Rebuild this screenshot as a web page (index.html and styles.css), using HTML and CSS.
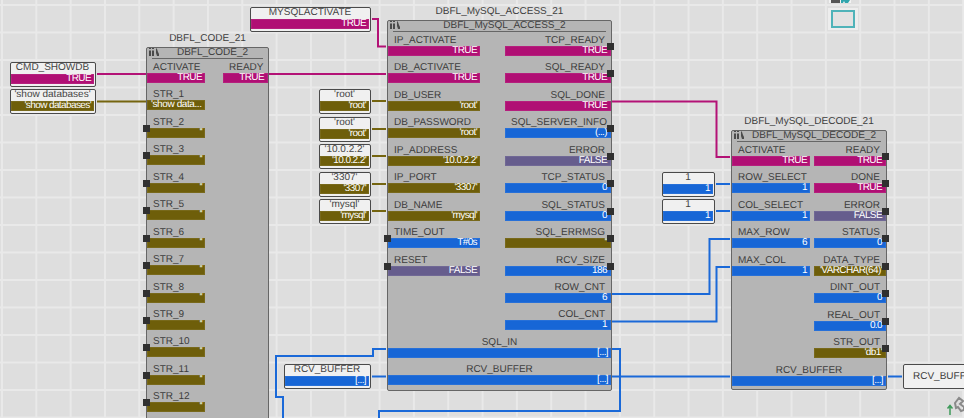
FILE: index.html
```html
<!DOCTYPE html>
<html lang="en">
<head>
<meta charset="utf-8">
<title>DBFL function block diagram</title>
<link rel="stylesheet" href="styles.css">
</head>
<body>
<main class="canvas">
  <svg class="wires" width="964" height="418" viewBox="0 0 964 418">
    <g class="w-bool">
      <path d="M97 74H146"/>
      <path d="M269 74H386"/>
      <path d="M372 19H378V46.5H386"/>
      <path d="M612 101.5H716.500V157H730"/>
    </g>
    <g class="w-str">
      <path d="M97 101.500H146"/>
      <path d="M372 101H386"/>
      <path d="M372 129H386"/>
      <path d="M372 156H386"/>
      <path d="M372 184H386"/>
      <path d="M372 211H386"/>
    </g>
    <g class="w-int">
      <path d="M716 184H730"/>
      <path d="M716 211H730"/>
      <path d="M612 294H709.500V239H730"/>
      <path d="M612 321.500H716.500V267H730"/>
      <path d="M386 349H373V356H276V397H283V418"/>
      <path d="M612 349H620V411H379V418"/>
      <path d="M372 376.500H386"/>
      <path d="M612 376.500H730"/>
      <path d="M888 376.500H902"/>
    </g>
  </svg>

  <section class="var v-cmd"><div class="var-name">CMD_SHOWDB</div><div class="bar bool">TRUE</div></section>
  <section class="var v-show"><div class="var-name">'show databases'</div><div class="bar str">'show databases'</div></section>
  <section class="var v-active"><div class="var-name">MYSQLACTIVATE</div><div class="bar bool">TRUE</div></section>
  <section class="var v-user"><div class="var-name">'root'</div><div class="bar str">'root'</div></section>
  <section class="var v-pass"><div class="var-name">'root'</div><div class="bar str">'root'</div></section>
  <section class="var v-ip"><div class="var-name">'10.0.2.2'</div><div class="bar str">'10.0.2.2'</div></section>
  <section class="var v-port"><div class="var-name">'3307'</div><div class="bar str">'3307'</div></section>
  <section class="var v-db"><div class="var-name">'mysql'</div><div class="bar str">'mysql'</div></section>
  <section class="var v-buf"><div class="var-name">RCV_BUFFER</div><div class="bar int">[...]</div></section>
  <section class="var v-row"><div class="var-name">1</div><div class="bar int">1</div></section>
  <section class="var v-col"><div class="var-name">1</div><div class="bar int">1</div></section>
  <section class="var-out">RCV_BUFFER</section>

  <article class="fb fb-code">
    <div class="fb-name">DBFL_CODE_21</div>
    <header class="fb-head">
      <svg class="fb-icon" width="12" height="10" viewBox="0 0 12 10"><path d="M1 1h2v1H1zM4 1h2v1H4zM1 3.500h2V9H1zM4 3.500h2V9H4zM8 1l1 1 1 3 1 2v2H9L8 6z"/></svg>
      DBFL_CODE_2
    </header>
    <div class="ports">
      <div class="col">
        <div class="port"><span>ACTIVATE</span><div class="bar bool">TRUE</div></div>
        <div class="port"><span>STR_1</span><div class="bar str bar-left">'show data...</div></div>
        <div class="port"><span>STR_2</span><div class="bar str pin-l">''</div></div>
        <div class="port"><span>STR_3</span><div class="bar str pin-l">''</div></div>
        <div class="port"><span>STR_4</span><div class="bar str pin-l">''</div></div>
        <div class="port"><span>STR_5</span><div class="bar str pin-l">''</div></div>
        <div class="port"><span>STR_6</span><div class="bar str pin-l">''</div></div>
        <div class="port"><span>STR_7</span><div class="bar str pin-l">''</div></div>
        <div class="port"><span>STR_8</span><div class="bar str pin-l">''</div></div>
        <div class="port"><span>STR_9</span><div class="bar str pin-l">''</div></div>
        <div class="port"><span>STR_10</span><div class="bar str pin-l">''</div></div>
        <div class="port"><span>STR_11</span><div class="bar str pin-l">''</div></div>
        <div class="port"><span>STR_12</span><div class="bar str pin-l">''</div></div>
      </div>
      <div class="col col-out">
        <div class="port"><span>READY</span><div class="bar bool">TRUE</div></div>
      </div>
    </div>
  </article>

  <article class="fb fb-access">
    <div class="fb-name">DBFL_MySQL_ACCESS_21</div>
    <header class="fb-head">
      <svg class="fb-icon" width="12" height="10" viewBox="0 0 12 10"><path d="M1 1h2v1H1zM4 1h2v1H4zM1 3.500h2V9H1zM4 3.500h2V9H4zM8 1l1 1 1 3 1 2v2H9L8 6z"/></svg>
      DBFL_MySQL_ACCESS_2
    </header>
    <div class="ports">
      <div class="col">
        <div class="port"><span>IP_ACTIVATE</span><div class="bar bool">TRUE</div></div>
        <div class="port"><span>DB_ACTIVATE</span><div class="bar bool">TRUE</div></div>
        <div class="port"><span>DB_USER</span><div class="bar str">'root'</div></div>
        <div class="port"><span>DB_PASSWORD</span><div class="bar str">'root'</div></div>
        <div class="port"><span>IP_ADDRESS</span><div class="bar str">'10.0.2.2'</div></div>
        <div class="port"><span>IP_PORT</span><div class="bar str">'3307'</div></div>
        <div class="port"><span>DB_NAME</span><div class="bar str">'mysql'</div></div>
        <div class="port"><span>TIME_OUT</span><div class="bar int pin-l">T#0s</div></div>
        <div class="port"><span>RESET</span><div class="bar off pin-l">FALSE</div></div>
      </div>
      <div class="col col-out">
        <div class="port"><span>TCP_READY</span><div class="bar bool pin-r">TRUE</div></div>
        <div class="port"><span>SQL_READY</span><div class="bar bool pin-r">TRUE</div></div>
        <div class="port"><span>SQL_DONE</span><div class="bar bool">TRUE</div></div>
        <div class="port"><span>SQL_SERVER_INFO</span><div class="bar int pin-r">(...)</div></div>
        <div class="port"><span>ERROR</span><div class="bar off pin-r">FALSE</div></div>
        <div class="port"><span>TCP_STATUS</span><div class="bar int pin-r">0</div></div>
        <div class="port"><span>SQL_STATUS</span><div class="bar int pin-r">0</div></div>
        <div class="port"><span>SQL_ERRMSG</span><div class="bar str pin-r">''</div></div>
        <div class="port"><span>RCV_SIZE</span><div class="bar int pin-r">186</div></div>
        <div class="port"><span>ROW_CNT</span><div class="bar int">6</div></div>
        <div class="port"><span>COL_CNT</span><div class="bar int">1</div></div>
      </div>
    </div>
    <div class="port port-full"><span>SQL_IN</span><div class="bar int">[...]</div></div>
    <div class="port port-full"><span>RCV_BUFFER</span><div class="bar int">[...]</div></div>
  </article>

  <article class="fb fb-decode">
    <div class="fb-name">DBFL_MySQL_DECODE_21</div>
    <header class="fb-head">
      <svg class="fb-icon" width="12" height="10" viewBox="0 0 12 10"><path d="M1 1h2v1H1zM4 1h2v1H4zM1 3.500h2V9H1zM4 3.500h2V9H4zM8 1l1 1 1 3 1 2v2H9L8 6z"/></svg>
      DBFL_MySQL_DECODE_2
    </header>
    <div class="ports">
      <div class="col">
        <div class="port"><span>ACTIVATE</span><div class="bar bool">TRUE</div></div>
        <div class="port"><span>ROW_SELECT</span><div class="bar int">1</div></div>
        <div class="port"><span>COL_SELECT</span><div class="bar int">1</div></div>
        <div class="port"><span>MAX_ROW</span><div class="bar int">6</div></div>
        <div class="port"><span>MAX_COL</span><div class="bar int">1</div></div>
      </div>
      <div class="col col-out">
        <div class="port"><span>READY</span><div class="bar bool pin-r">TRUE</div></div>
        <div class="port"><span>DONE</span><div class="bar bool pin-r">TRUE</div></div>
        <div class="port"><span>ERROR</span><div class="bar off pin-r">FALSE</div></div>
        <div class="port"><span>STATUS</span><div class="bar int pin-r">0</div></div>
        <div class="port"><span>DATA_TYPE</span><div class="bar str pin-r">'VARCHAR(64)'</div></div>
        <div class="port"><span>DINT_OUT</span><div class="bar int pin-r">0</div></div>
        <div class="port"><span>REAL_OUT</span><div class="bar int pin-r">0.0</div></div>
        <div class="port"><span>STR_OUT</span><div class="bar str pin-r">'db1'</div></div>
      </div>
    </div>
    <div class="port port-full"><span>RCV_BUFFER</span><div class="bar int">[...]</div></div>
  </article>

  <div class="tool-top"><svg width="22" height="3" viewBox="0 0 22 3"><path class="tool-dark" d="M2 0h9v3H2z"/><path class="tool-teal" d="M12 0h9l-2 3h-3l-1-2-1 2h-2z"/></svg></div>
  <div class="tool-box"><div class="tool-rect"></div></div>
  <svg class="corner" width="26" height="22" viewBox="0 0 26 22">
    <path class="corner-arrow" d="M9 21V12M6.500 14.500L9 11.500l2.500 3"/>
    <path class="corner-shape" d="M14 9l4-5 4 3-3 3 4 3v3l-3 1-3-4-2 1z"/>
  </svg>
</main>
</body>
</html>
```
FILE: styles.css
```css
* { box-sizing: border-box; }
html, body { margin: 0; padding: 0; }
body { width: 964px; height: 418px; overflow: hidden; }

.canvas {
  position: relative;
  width: 964px;
  height: 418px;
  overflow: hidden;
  background-color: #dedede;
  background-image:
    linear-gradient(90deg, #e9e9e9 2px, transparent 2px),
    linear-gradient(180deg, #e9e9e9 2px, transparent 2px);
  background-size: 34.33px 27.5px;
  background-position: 1px 4px;
  font-family: "Liberation Sans", Arial, sans-serif;
  font-size: 10px;
  color: #3d3d3d;
  text-rendering: geometricPrecision;
}

/* wires */
.wires { position: absolute; left: 0; top: 0; }
.wires path { fill: none; stroke-width: 2; }
.w-bool path { stroke: #b31276; }
.w-str path { stroke: #75650f; }
.w-int path { stroke: #1a69d8; }

/* value bars */
.bar {
  position: relative;
  height: 10px;
  line-height: 10px;
  padding-right: 3px;
  text-align: right;
  color: #fff;
  font-size: 10px;
  letter-spacing: -0.6px;
  white-space: nowrap;
  box-shadow: inset 0 0 0 1px rgba(255, 255, 255, 0.07);
}
.bool { background: #b00f74; }
.str { background: #6e5e0a; }
.int { background: #1766d6; }
.off { background: #665d8d; }
.bar-left { text-align: left; padding-left: 4px; letter-spacing: -0.4px; }
.col-out .bar { padding-right: 4px; }

.pin-l::before,
.pin-r::after {
  content: "";
  position: absolute;
  top: -3px;
  width: 7px;
  height: 7px;
  background: #303030;
}
.pin-l::before { left: -4px; }
.pin-r::after { right: -3px; }

/* free-standing variables */
.var {
  position: absolute;
  height: 25px;
  padding: 0 1px 2px 0;
  border: 1px solid #4a4a4a;
  border-radius: 2px;
  background: #f0f0f0;
}
.var-name {
  height: 10.5px;
  line-height: 10px;
  text-align: center;
  color: #444;
}
.v-cmd { left: 10px; top: 62px; width: 86px; }
.v-show { left: 10px; top: 89px; width: 86px; }
.v-active { left: 250px; top: 7px; width: 121px; }
.v-user { left: 319px; top: 89px; width: 52px; }
.v-pass { left: 319px; top: 117px; width: 52px; }
.v-ip { left: 319px; top: 144px; width: 52px; }
.v-port { left: 319px; top: 172px; width: 52px; }
.v-db { left: 319px; top: 199px; width: 52px; }
.v-buf { left: 284px; top: 364px; width: 87px; }
.v-row { left: 662px; top: 172px; width: 53px; }
.v-col { left: 662px; top: 199px; width: 53px; }

.var-out {
  position: absolute;
  left: 903px;
  top: 364px;
  width: 90px;
  height: 25px;
  padding-left: 9px;
  line-height: 23px;
  border: 1px solid #4a4a4a;
  border-radius: 2px;
  background: #f0f0f0;
}

/* function blocks */
.fb {
  position: absolute;
  border: 1px solid #666;
  border-radius: 2px;
  background: #b5b5b5;
}
.fb-code { left: 146px; top: 47px; width: 123px; height: 400px; }
.fb-access { left: 387px; top: 20px; width: 225px; height: 371px; }
.fb-decode { left: 731px; top: 130px; width: 156px; height: 260px; }

.fb-name {
  position: absolute;
  left: 0;
  right: 0;
  bottom: calc(100% + 3px);
  height: 12px;
  line-height: 12px;
  text-align: center;
  white-space: nowrap;
}
.fb-head {
  position: relative;
  height: 11px;
  margin: 0 5px;
  padding-left: 10px;
  line-height: 10px;
  text-align: center;
  border-bottom: 1px solid #666;
  white-space: nowrap;
}
.fb-icon {
  position: absolute;
  left: -4px;
  top: -1px;
  fill: #4a4a4a;
}

.ports { display: flex; justify-content: space-between; }
.col { display: flex; flex-direction: column; }
.fb-code .col { width: 58px; }
.fb-code .col-out { width: 45px; }
.fb-access .col { width: 92px; }
.fb-access .col-out { width: 106px; }
.fb-decode .col { width: 78px; }
.fb-decode .col-out { width: 72px; }

.port { height: 27.45px; }
.port > span {
  display: block;
  height: 14px;
  line-height: 17px;
  padding: 0 6px;
  white-space: nowrap;
}
.col-out .port > span { text-align: right; }
.port-full > span { text-align: center; }

/* canvas tools */
.tool-top { position: absolute; left: 829px; top: 0; height: 3px; background: #f2f2f2; }
.tool-top svg { display: block; }
.tool-dark { fill: #555; }
.tool-teal { fill: #2fa5ad; }
.tool-box {
  position: absolute;
  left: 828px;
  top: 8px;
  width: 30px;
  height: 22px;
  padding: 2px 3px;
  background: #ededed;
}
.tool-rect { width: 100%; height: 100%; border: 2px solid #4fb3b9; background: #e2e2e2; }
.corner { position: absolute; left: 941px; top: 394px; }
.corner-arrow { fill: none; stroke: #3e9a5a; stroke-width: 1.500; }
.corner-shape { fill: none; stroke: #8a8a8a; stroke-width: 2; }
```
